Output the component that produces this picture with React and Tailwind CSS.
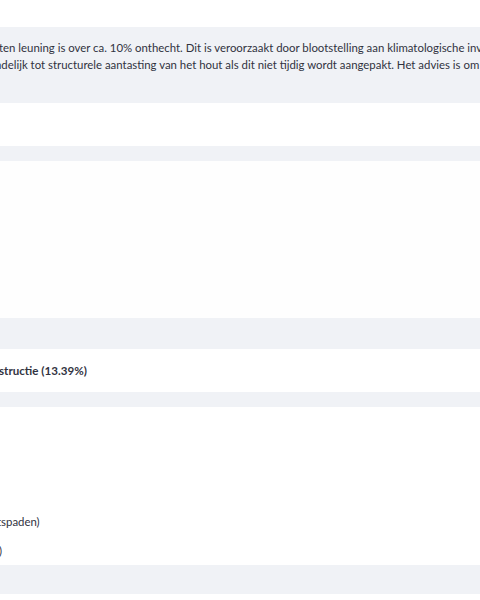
export default function App() {
  return (
    <div className="w-[480px] h-[600px] overflow-hidden bg-white text-[#31333f] font-['Lato',sans-serif] text-[11.4px] leading-[16.8px]">
      <div className="h-[27px]" />

      <div className="h-[76px] bg-[#f0f2f6] pt-[13px] whitespace-nowrap overflow-hidden">
        <p className="-ml-[1px]">ten leuning is over ca. 10% onthecht. Dit is veroorzaakt door blootstelling aan klimatologische invloeden</p>
        <p className="-ml-[5px]">ndelijk tot structurele aantasting van het hout als dit niet tijdig wordt aangepakt. Het advies is om de</p>
      </div>

      <div className="h-[43px]" />
      <div className="h-[15px] bg-[#f0f2f6]" />
      <div className="h-[157px] bg-[#fefefe]" />
      <div className="h-[31px] bg-[#f0f2f6]" />

      <div className="h-[43px] flex items-center whitespace-nowrap overflow-hidden">
        <p className="font-bold -ml-[1px] pt-[2px] text-[11.6px]">structie (13.39%)</p>
      </div>

      <div className="h-[15px] bg-[#f0f2f6]" />

      <div className="h-[158px] relative whitespace-nowrap overflow-hidden">
        <p className="absolute left-[-3px] top-[107px]">tspaden)</p>
        <p className="absolute left-[-1px] top-[136px]">)</p>
      </div>

      <div className="h-[29px] bg-[#f0f2f6]" />
    </div>
  )
}
